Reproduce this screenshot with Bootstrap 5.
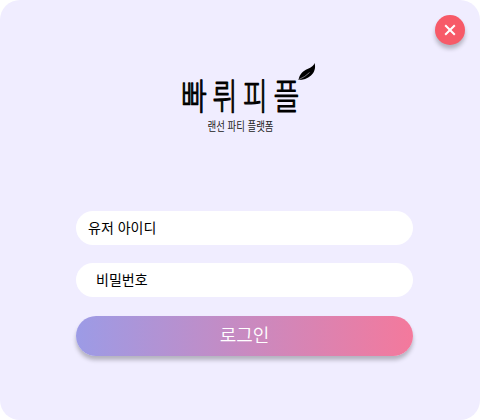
<!DOCTYPE html>
<html lang="ko">
<head>
<meta charset="utf-8">
<meta name="viewport" content="width=device-width, initial-scale=1">
<title>로그인</title>
<link href="https://cdn.jsdelivr.net/npm/bootstrap@5.3.0/dist/css/bootstrap.min.css" rel="stylesheet">
<style>
body { background: #fff; font-family: "Noto Sans CJK KR", sans-serif; overflow: hidden; }
.login-panel { width: 480px; height: 420px; background: #f0edff; border-radius: 20px; }
.close-btn { top: 15px; right: 15px; width: 30px; height: 30px; background: #f75a68; box-shadow: 0 4px 4px rgba(0,0,0,.25); }
.brand { width: 140px; height: 76px; margin: 60px 0 0 175px; }
.brand text { font-family: "Noto Sans CJK KR", sans-serif; }
.login-form { width: 337px; margin: 75px 0 0 76px; }
.field { height: 34px; font-size: 14px; line-height: 20px; color: #000; background: #fff; margin-bottom: 18px; padding: 6px 12px 8px; }
.field::placeholder { color: #000; opacity: 1; }
.field-password { padding-left: 20px; margin-bottom: 19px; }
.login-btn { height: 40px; font-size: 18px; line-height: 36px; padding: 0 0 4px; font-weight: 350; background: linear-gradient(90deg, #9c9be6 0%, #f4799c 100%); box-shadow: 0 4px 4px rgba(0,0,0,.25); }
</style>
</head>
<body>
<main class="login-panel position-relative d-flex flex-column">
  <button type="button" aria-label="닫기" class="close-btn btn border-0 p-0 rounded-circle position-absolute d-flex align-items-center justify-content-center">
    <svg width="12" height="12" viewBox="0 0 12 12"><path d="M1.200 1.200l9.600 9.600M10.800 1.200l-9.600 9.600" stroke="#fff" stroke-width="2"/></svg>
  </button>
  <header class="brand">
    <svg class="d-block" width="140" height="76" viewBox="175 60 140 76" overflow="visible">
      <g font-size="36" font-weight="300" fill="#000" stroke="#000" stroke-width="1.100" stroke-linejoin="round">
        <text transform="translate(181 109.700) scale(.78 1)">빠</text>
        <text transform="translate(212.500 109.700) scale(.75 1)">뤼</text>
        <text transform="translate(243 109.700) scale(.74 1)">피</text>
        <text transform="translate(273.500 109.700) scale(.78 1)">플</text>
      </g>
      <text x="207.500" y="131.300" font-size="12" fill="#222" textLength="66" lengthAdjust="spacingAndGlyphs">랜선 파티 플랫폼</text>
      <path d="M298.500 80C299.500 74 303 71 307.500 69C311.500 67.300 314 65.500 314.500 63C316 67.500 314.500 72.500 311 75.500C307.500 78.500 303 80 298.500 80Z" fill="#000"/>
      <path d="M299 79.500Q305 77 309.500 72.500" fill="none" stroke="#f0edff" stroke-width=".5"/>
    </svg>
  </header>
  <form class="login-form d-flex flex-column">
    <input class="field form-control border-0 rounded-pill" type="text" placeholder="유저 아이디" aria-label="유저 아이디">
    <input class="field field-password form-control border-0 rounded-pill" type="password" placeholder="비밀번호" aria-label="비밀번호">
    <button type="button" class="login-btn btn border-0 rounded-pill text-white">로그인</button>
  </form>
</main>
<script src="https://cdn.jsdelivr.net/npm/bootstrap@5.3.0/dist/js/bootstrap.bundle.min.js"></script>
</body>
</html>
